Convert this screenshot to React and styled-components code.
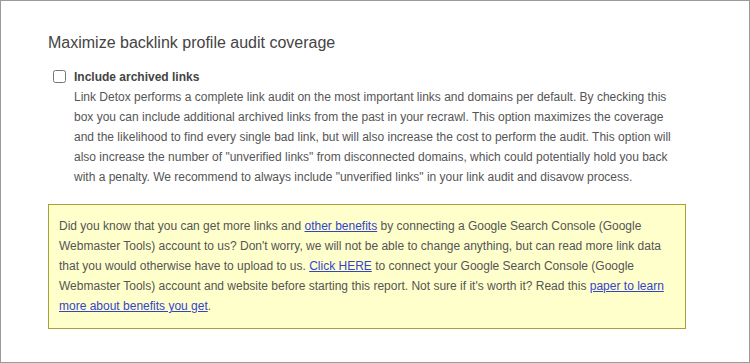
import React from 'react';
import styled, { createGlobalStyle } from 'styled-components';

const GlobalStyle = createGlobalStyle`
  html, body {
    margin: 0;
    padding: 0;
    background: #fff;
  }
  body {
    font-family: "Liberation Sans", Arial, sans-serif;
  }
`;

const Frame = styled.div`
  box-sizing: border-box;
  width: 750px;
  height: 363px;
  border: 1px solid #9a9a9a;
  padding: 31px 0 0 47px;
  color: #555;
`;

const Heading = styled.h3`
  margin: 0 0 13px;
  font-size: 16px;
  font-weight: normal;
  line-height: 22px;
  color: #444;
`;

const Option = styled.div`
  display: grid;
  grid-template-columns: 21px 1fr;
  padding-left: 5px;
`;

const Check = styled.input.attrs({ type: 'checkbox' })`
  margin: 3px 0 0;
  width: 13px;
  height: 13px;
`;

const Label = styled.label`
  display: block;
  font-size: 12px;
  font-weight: bold;
  line-height: 20px;
  color: #444;
`;

const Description = styled.p`
  margin: 0;
  font-size: 12px;
  line-height: 20px;
  width: 600px;
`;

const Notice = styled.div`
  box-sizing: border-box;
  width: 638px;
  margin-top: 17px;
  padding: 11px 10px 12px;
  background: #ffffcc;
  border: 1px solid #a3a33a;
  font-size: 12px;
  line-height: 20px;
  color: #555;

  a {
    color: #3344cc;
    text-decoration: underline;
  }
`;

export default function App() {
  return (
    <>
      <GlobalStyle />
      <Frame>
        <Heading>Maximize backlink profile audit coverage</Heading>
        <Option>
          <Check id="archived" />
          <div>
            <Label htmlFor="archived">Include archived links</Label>
            <Description>
              Link Detox performs a complete link audit on the most important links and domains per default. By checking this
              box you can include additional archived links from the past in your recrawl. This option maximizes the coverage
              and the likelihood to find every single bad link, but will also increase the cost to perform the audit. This option will
              also increase the number of "unverified links" from disconnected domains, which could potentially hold you back
              with a penalty. We recommend to always include "unverified links" in your link audit and disavow process.
            </Description>
          </div>
        </Option>
        <Notice>
          Did you know that you can get more links and <a href="#">other benefits</a> by connecting a Google Search Console (Google
          Webmaster Tools) account to us? Don't worry, we will not be able to change anything, but can read more link data
          that you would otherwise have to upload to us. <a href="#">Click HERE</a> to connect your Google Search Console (Google
          Webmaster Tools) account and website before starting this report. Not sure if it's worth it? Read this <a href="#">paper to learn
          more about benefits you get</a>.
        </Notice>
      </Frame>
    </>
  );
}
